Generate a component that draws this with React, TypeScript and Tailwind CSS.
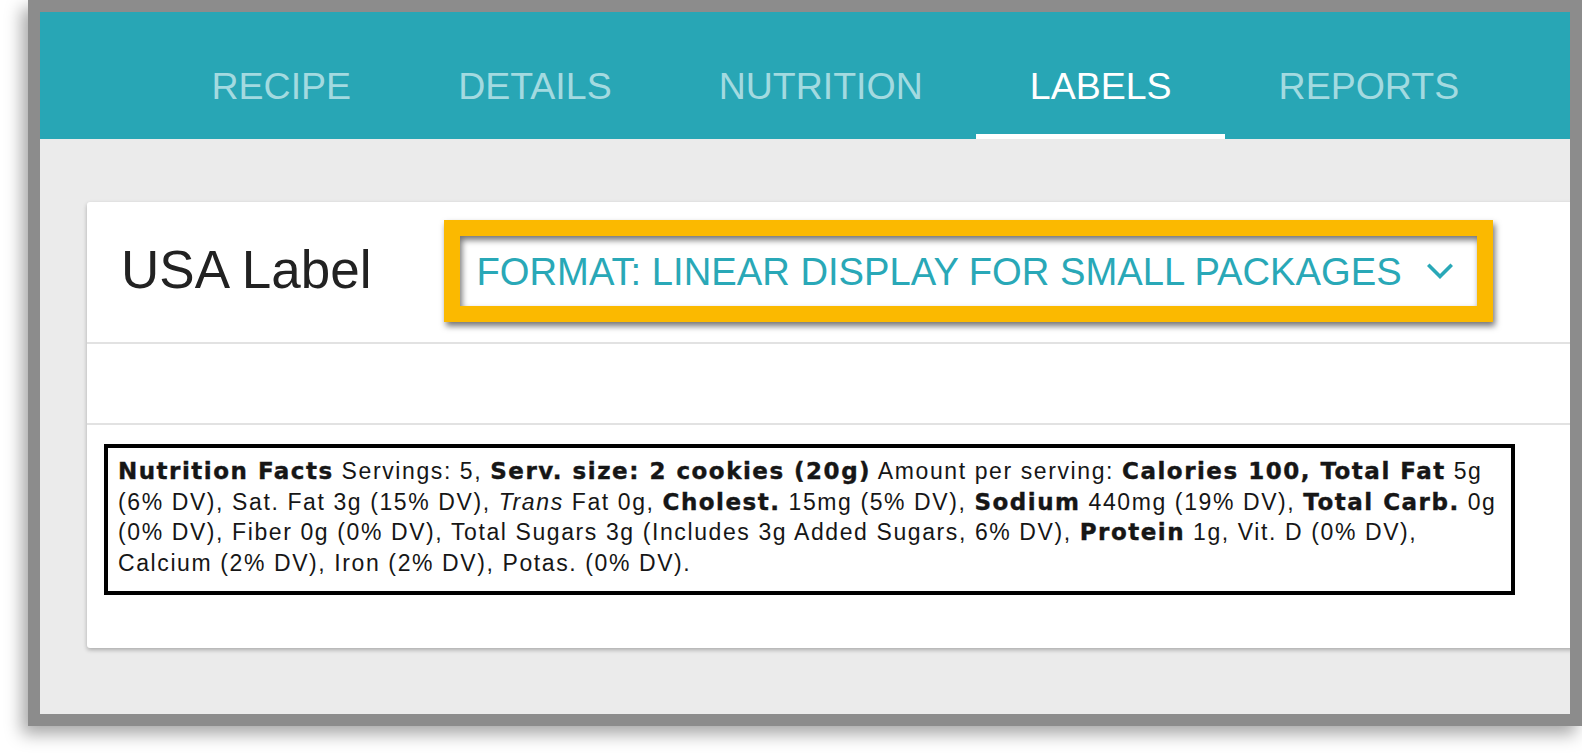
import React from 'react';

const TABS = ['RECIPE', 'DETAILS', 'NUTRITION', 'LABELS', 'REPORTS'];
const ACTIVE_TAB = 'LABELS';

// heavy face used for the bold parts of the linear label
function B({ children }: { children: React.ReactNode }) {
  return (
    <span className="font-bold tracking-[1.5px] [font-family:'DejaVu_Sans',sans-serif] [-webkit-text-stroke:0.4px_#161616]">
      {children}
    </span>
  );
}

function LinearLabel() {
  return (
    <div className="ml-[17px] mt-[19px] w-[1411px] border-4 border-black pl-[10px] pt-[8px] pb-[13px] text-[23px] leading-[30.5px] tracking-[1.6px] text-[#161616] whitespace-nowrap">
      <B>Nutrition Facts</B> Servings: 5, <B>Serv. size: 2 cookies (20g)</B> Amount per serving:{' '}
      <B>Calories 100, Total Fat</B> 5g
      <br />
      (6% DV), Sat. Fat 3g (15% DV), <i>Trans</i> Fat 0g, <B>Cholest.</B> 15mg (5% DV), <B>Sodium</B> 440mg (19%
      DV), <B>Total Carb.</B> 0g
      <br />
      (0% DV), Fiber 0g (0% DV), Total Sugars 3g (Includes 3g Added Sugars, 6% DV), <B>Protein</B> 1g, Vit. D (0%
      DV),
      <br />
      Calcium (2% DV), Iron (2% DV), Potas. (0% DV).
    </div>
  );
}

export default function App() {
  return (
    <div className="w-[1582px] h-[754px] bg-white overflow-hidden pl-[28px] [font-family:'Liberation_Sans',Arial,sans-serif]">
      <div className="w-[1554px] h-[726px] border-[12px] border-[#8c8c8c] bg-[#ebebeb] shadow-[-6px_8px_16px_rgba(0,0,0,0.35)] overflow-hidden flex flex-col">
        {/* Tabs */}
        <nav className="h-[127px] shrink-0 bg-[#28a6b5] flex pl-[118px]">
          {TABS.map((tab) => (
            <div
              key={tab}
              className={
                tab === ACTIVE_TAB
                  ? 'h-full px-[53.5px] pt-[56px] border-b-[5px] border-white text-white text-[37.5px] leading-[37.5px]'
                  : 'h-full px-[53.5px] pt-[56px] border-b-[5px] border-transparent text-[#a3dae0] text-[37.5px] leading-[37.5px]'
              }
            >
              {tab}
            </div>
          ))}
        </nav>

        {/* Label card */}
        <div className="relative mt-[63px] ml-[47px] w-[1520px] h-[446px] shrink-0 bg-white rounded-[3px] shadow-[0_2px_4px_rgba(0,0,0,0.28)]">
          <div className="h-[142px] border-b-2 border-[#e2e2e2] flex items-center pl-[34px]">
            <span className="text-[53px] leading-none text-[#222] mb-[6px]">USA Label</span>
            <button className="ml-[105px] flex items-center text-[38.2px] leading-none text-[#29a8b7]">
              FORMAT: LINEAR DISPLAY FOR SMALL PACKAGES
              <svg className="ml-[25px]" width="26" height="17" viewBox="0 0 26 17" fill="none">
                <polyline points="2.5,3 13,13.5 23.5,3" stroke="#29a8b7" strokeWidth="3.6" strokeLinecap="square" />
              </svg>
            </button>
          </div>
          <div className="h-[81px] border-b-2 border-[#e2e2e2]" />
          <LinearLabel />

          {/* highlight annotation drawn over the format selector */}
          <div className="absolute left-[357px] top-[18px] w-[1049px] h-[102px] border-[16px] border-[#fbb900] drop-shadow-[2px_4px_3px_rgba(0,0,0,0.55)]" />
        </div>
      </div>
    </div>
  );
}
